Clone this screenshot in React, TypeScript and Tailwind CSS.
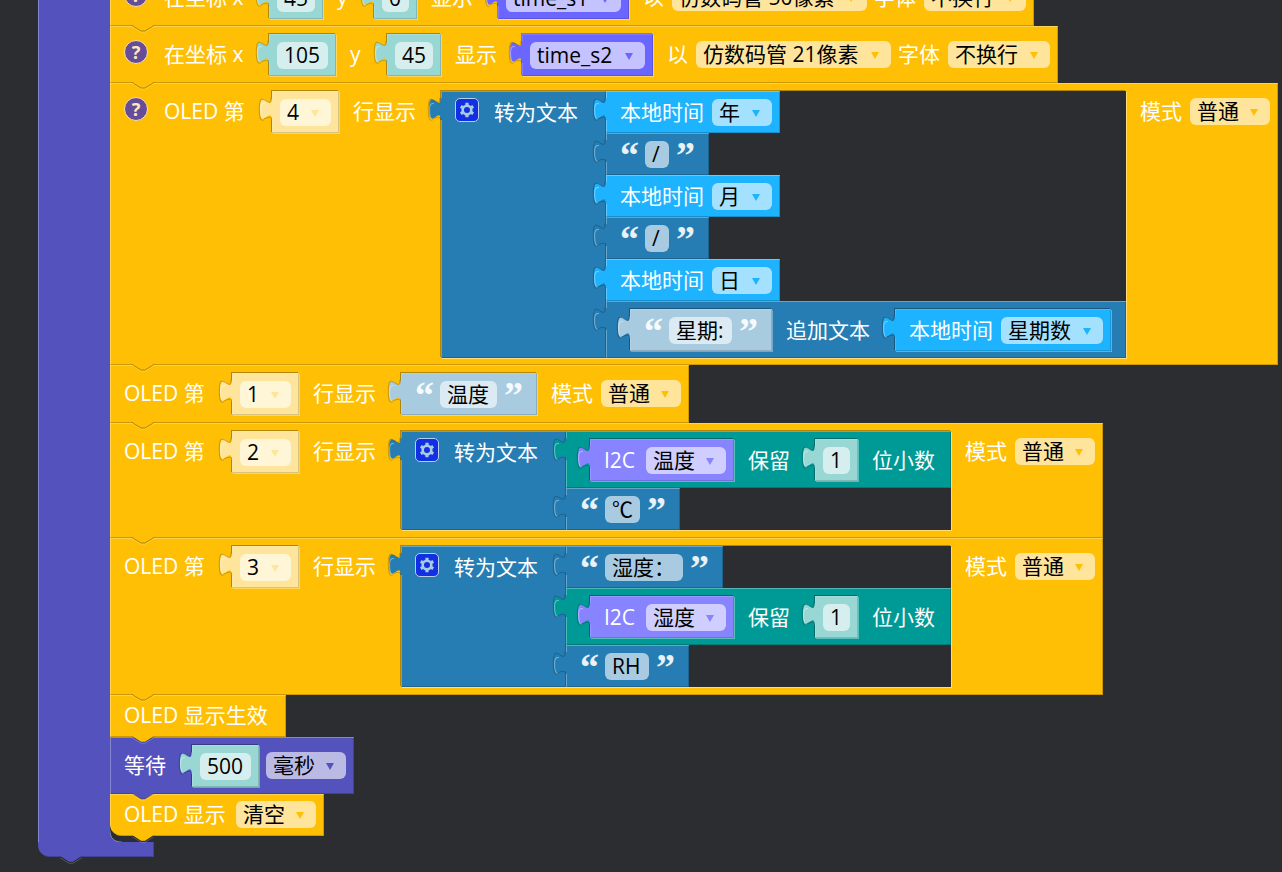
import { useState } from 'react'
import type { ReactNode } from 'react'
import clsx from 'clsx'

type Tone = 'oled' | 'oledLight' | 'math' | 'mathLight' | 'variable' | 'text' | 'textLight' | 'time' | 'sensor' | 'loop'

const BG: Record<Tone, string> = {
  oled: 'bg-[#ffbf05]',
  oledLight: 'bg-[#ffe59b]',
  math: 'bg-[#009a96]',
  mathLight: 'bg-[#99d7d5]',
  variable: 'bg-[#6b66ff]',
  text: 'bg-[#267db3]',
  textLight: 'bg-[#a8cbe0]',
  time: 'bg-[#1db3ff]',
  sensor: 'bg-[#8884ff]',
  loop: 'bg-[#5453bd]',
}

// same colours again, for svg fills
const FILL: Record<Tone, string> = {
  oled: 'text-[#ffbf05]',
  oledLight: 'text-[#ffe59b]',
  math: 'text-[#009a96]',
  mathLight: 'text-[#99d7d5]',
  variable: 'text-[#6b66ff]',
  text: 'text-[#267db3]',
  textLight: 'text-[#a8cbe0]',
  time: 'text-[#1db3ff]',
  sensor: 'text-[#8884ff]',
  loop: 'text-[#5453bd]',
}

const BEVEL = 'shadow-[inset_1px_1px_0_rgba(255,255,255,0.3),inset_-1px_-1px_0_rgba(0,0,0,0.2)]'
const SOCKET =
  'shadow-[inset_1px_1px_0_rgba(255,255,255,0.15),inset_-1px_-1px_0_rgba(0,0,0,0.15),-1px_-1px_0_rgba(0,0,0,0.3),1px_1px_0_rgba(255,255,255,0.35)]'

// Everything inside a plugged-in block sits one pixel lower than in a statement
const ITEM = 'mt-[7px] mb-[8px] h-[27px] shrink-0 [[data-value]_&]:mt-[8px] [[data-value]_&]:mb-[7px]'

function Tab({ tone }: { tone: Tone }) {
  return (
    <svg
      className={clsx('absolute -left-[12px] top-0 h-[29px] w-[13px] overflow-visible', FILL[tone])}
      viewBox="0 0 9 20"
      aria-hidden="true"
    >
      <path d="M9 5H8c0 10-8-8-8 7.5s8-2.5 8 7.5h1z" fill="currentColor" />
      <path d="M8 5c0 10-8-8-8 7.5c0 8 1.5 8.500 3.200 7.600" fill="none" stroke="#000" strokeOpacity="0.2" strokeWidth="0.7" transform="translate(-0.5 -0.3)" />
      <path d="M3 8.700c-1.800-.6-3 .4-3 3.800c0 5 .8 7 2 7" fill="none" stroke="#fff" strokeOpacity="0.4" strokeWidth="0.7" transform="translate(0.4 0.1)" />
      <path d="M2.600 19.400c2-1 5.400-2.600 5.400 .6" fill="none" stroke="#000" strokeOpacity="0.2" strokeWidth="0.7" />
    </svg>
  )
}

// The bump under a statement, drawn over the block that follows it
function Bump({ tone }: { tone: Tone }) {
  return (
    <svg
      className={clsx('absolute left-[22px] top-full z-10 -mt-px h-[8px] w-[22px] overflow-visible', FILL[tone])}
      viewBox="0 0 22 8"
      aria-hidden="true"
    >
      <path d="M0 0L9 6h4L22 0z" fill="currentColor" />
      <path d="M0 .5L9 6h4L22 .5" fill="none" stroke="#000" strokeOpacity="0.3" />
      <path d="M0 1.700L9 7.200h4L22 1.700" fill="none" stroke="#fff" strokeOpacity="0.2" />
    </svg>
  )
}

function Label({ className, children }: { className?: string; children: ReactNode }) {
  return (
    <span
      className={clsx(
        ITEM,
        'block whitespace-nowrap leading-[27px] text-white nth-last-2:mr-[7px] [[data-value]+&]:ml-[7px]',
        className,
      )}
    >
      {children}
    </span>
  )
}

function Drop({ tone, width, label, options }: { tone: Tone; width: string; label: string; options: string[] }) {
  return (
    <span className={clsx(ITEM, 'relative block', width)}>
      <select
        aria-label={label}
        className="block h-full w-full appearance-none rounded-md bg-white/60 pl-[7px] leading-[27px] text-black outline-none"
      >
        {options.map((o) => (
          <option key={o}>{o}</option>
        ))}
      </select>
      <svg
        className={clsx('pointer-events-none absolute right-[12px] top-[11px] h-[7px] w-[8px]', FILL[tone])}
        viewBox="0 0 8 7"
        aria-hidden="true"
      >
        <path d="M0 0H8L4 7z" fill="currentColor" />
      </svg>
    </span>
  )
}

function Field({ width, label, initial }: { width: string; label: string; initial: string }) {
  const [value, setValue] = useState(initial)
  return (
    <input
      aria-label={label}
      value={value}
      onChange={(e) => setValue(e.target.value)}
      className={clsx(ITEM, 'block rounded-md bg-white/60 px-[7px] leading-[27px] text-black outline-none', width)}
    />
  )
}

function Quote({ children }: { children: string }) {
  return (
    <span className="mt-[3px] h-[27px] w-[18px] shrink-0 text-center font-['Liberation_Serif',serif] text-[38px] font-bold leading-[38px] text-white/90">
      {children}
    </span>
  )
}

interface ValueProps {
  tone: Tone
  flush?: boolean
  className?: string
  children: ReactNode
}

// A block that plugs in sideways. `flush` ones are stacked in a join list.
function Value({ tone, flush, className = 'px-2', children }: ValueProps) {
  return (
    <div
      data-value
      className={clsx(
        'relative flex w-fit shrink-0 items-start gap-[7px]',
        !flush && 'ml-[17px] first:ml-[10px] nth-last-2:mr-[7px]',
        BG[tone],
        flush ? BEVEL : SOCKET,
        className,
      )}
    >
      {children}
      <Tab tone={tone} />
    </div>
  )
}

function Num({ value, width, label }: { value: string; width: string; label: string }) {
  return (
    <Value tone="mathLight">
      <Field width={width} label={label} initial={value} />
    </Value>
  )
}

function LineNo({ value }: { value: string }) {
  return (
    <Value tone="oledLight">
      <Drop tone="oledLight" width="w-[51px]" label="行号" options={[value]} />
    </Value>
  )
}

function Text({ value, width, flush, shadow }: { value: string; width: string; flush?: boolean; shadow?: boolean }) {
  return (
    <Value tone={shadow ? 'textLight' : 'text'} flush={flush} className="pl-[14px] pr-[15px]">
      <Quote>“</Quote>
      <Field width={width} label="文本" initial={value} />
      <Quote>”</Quote>
    </Value>
  )
}

function LocalTime({ unit, width, flush }: { unit: string; width: string; flush?: boolean }) {
  return (
    <Value tone="time" flush={flush} className="pl-[14px] pr-2">
      <Label className="w-[85px]">本地时间</Label>
      <Drop tone="time" width={width} label="时间单位" options={[unit]} />
    </Value>
  )
}

function Rounded({ reading }: { reading: string }) {
  return (
    <Value tone="math" flush className="pl-[14px] pr-2 pt-2 pb-[7px]">
      <Value tone="sensor" className="pl-[14px] pr-2">
        <Label className="w-[35px]">I2C</Label>
        <Drop tone="sensor" width="w-[80px]" label="传感器读数" options={[reading]} />
      </Value>
      <Label className="w-[43px]">保留</Label>
      <Num value="1" width="w-[27px]" label="小数位数" />
      <Label className="w-[64px]">位小数</Label>
    </Value>
  )
}

function Join({ children }: { children: ReactNode }) {
  return (
    <div data-value className="relative ml-[17px] flex shrink-0 bg-[#2c2d30] shadow-[-1px_-1px_0_rgba(0,0,0,0.3),1px_1px_0_rgba(255,255,255,0.45)]">
      <div className={clsx('flex w-[165px] items-start gap-[15px] pl-[14px]', BG.text, BEVEL)}>
        <button type="button" aria-label="编辑列表" className="mt-[7px] flex size-6 shrink-0 items-center justify-center rounded-[5px] border border-[#b9cdf2] bg-[#1130e3]">
          <svg viewBox="0 0 18 18" className="size-[18px] text-[#a8cbe0]" aria-hidden="true">
            <circle cx="9" cy="9" r="4.300" fill="none" stroke="currentColor" strokeWidth="2.600" />
            <g stroke="currentColor" strokeWidth="3.200">
              <path d="M9 1.800v2.500M9 13.700v2.500" />
              <path d="M9 1.800v2.500M9 13.700v2.500" transform="rotate(60 9 9)" />
              <path d="M9 1.800v2.500M9 13.700v2.500" transform="rotate(-60 9 9)" />
            </g>
          </svg>
        </button>
        <Label>转为文本</Label>
      </div>
      <div className="flex flex-col">{children}</div>
      <Tab tone="text" />
    </div>
  )
}

function Help() {
  return (
    <button
      type="button"
      aria-label="帮助"
      className="mt-[6px] mr-[9px] flex size-6 shrink-0 items-center justify-center rounded-full border border-[#ffe2a0] bg-[#664d99] font-['Noto_Sans',sans-serif] text-[18px] font-bold leading-none text-[#ffe9b8]"
    >
      ?
    </button>
  )
}

function Statement({ tone = 'oled', className, children }: { tone?: Tone; className?: string; children: ReactNode }) {
  return (
    <div className={clsx('relative flex w-fit items-start gap-[7px] pl-[14px] pr-2', BG[tone], BEVEL, className)}>
      {children}
      <Bump tone={tone} />
    </div>
  )
}

function DrawAt({ x, y, xWidth, yWidth, variable, font }: Record<'x' | 'y' | 'xWidth' | 'yWidth' | 'variable' | 'font', string>) {
  return (
    <Statement className="pt-2 pb-[7px]">
      <Help />
      <Label className="w-[81px]">在坐标 x</Label>
      <Num value={x} width={xWidth} label="x 坐标" />
      <Label className="w-[13px]">y</Label>
      <Num value={y} width={yWidth} label="y 坐标" />
      <Label className="w-[43px]">显示</Label>
      <Value tone="variable">
        <Drop tone="variable" width="w-[115px]" label="变量" options={[variable]} />
      </Value>
      <Label className="w-[22px]">以</Label>
      <Drop tone="oled" width="w-[195px]" label="字体大小" options={[font]} />
      <Label className="w-[43px]">字体</Label>
      <Drop tone="oled" width="w-[102px]" label="换行" options={['不换行', '自动换行']} />
    </Statement>
  )
}

function ShowLine({ line, help, className = 'py-2', children }: { line: string; help?: boolean; className?: string; children: ReactNode }) {
  return (
    <Statement className={className}>
      {help && <Help />}
      <Label className="w-[84px]">OLED 第</Label>
      <LineNo value={line} />
      <Label className="w-[64px]">行显示</Label>
      {children}
      <Label className="w-[43px]">模式</Label>
      <Drop tone="oled" width="w-[80px]" label="显示模式" options={['普通', '反白']} />
    </Statement>
  )
}

export default function App() {
  return (
    <main className="min-h-screen overflow-hidden bg-[#2c2d30] pl-[38px] font-['Open_Sans','Noto_Sans_CJK_SC',sans-serif] text-[21px]">
      <div className="relative -mt-[31px] w-fit">
        <div className="flex">
          <div className={clsx('w-[72px] shrink-0 shadow-[inset_1px_0_0_rgba(255,255,255,0.3)]', BG.loop)} />
          <div className="relative pb-[6px]">
            <DrawAt x="45" y="0" xWidth="w-[38px]" yWidth="w-[27px]" variable="time_s1" font="仿数码管 50像素" />
            <DrawAt x="105" y="45" xWidth="w-[51px]" yWidth="w-[38px]" variable="time_s2" font="仿数码管 21像素" />
            <ShowLine line="4" help className="pt-2 pb-[7px]">
              <Join>
                <LocalTime unit="年" width="w-[60px]" flush />
                <Text value="/" width="w-[24px]" flush />
                <LocalTime unit="月" width="w-[60px]" flush />
                <Text value="/" width="w-[24px]" flush />
                <LocalTime unit="日" width="w-[60px]" flush />
                <Value tone="text" flush className="pl-[14px] pr-2 pt-2 pb-[7px]">
                  <Text value="星期:" width="w-[63px]" shadow />
                  <Label className="w-[85px]">追加文本</Label>
                  <LocalTime unit="星期数" width="w-[102px]" />
                </Value>
              </Join>
            </ShowLine>
            <ShowLine line="1">
              <Text value="温度" width="w-[57px]" shadow />
            </ShowLine>
            <ShowLine line="2">
              <Join>
                <Rounded reading="温度" />
                <Text value="℃" width="w-[35px]" flush />
              </Join>
            </ShowLine>
            <ShowLine line="3">
              <Join>
                <Text value="湿度：" width="w-[78px]" flush />
                <Rounded reading="湿度" />
                <Text value="RH" width="w-[44px]" flush />
              </Join>
            </ShowLine>
            <Statement>
              <Label className="w-[147px]">OLED 显示生效</Label>
            </Statement>
            <Statement tone="loop" className="pt-2 pb-[7px]">
              <Label className="w-[44px]">等待</Label>
              <Num value="500" width="w-[51px]" label="时长" />
              <Drop tone="loop" width="w-[80px]" label="时间单位" options={['毫秒', '秒']} />
            </Statement>
            <Statement className="rounded-bl-[12px]">
              <Label className="w-[105px]">OLED 显示</Label>
              <Drop tone="oled" width="w-[80px]" label="操作" options={['清空', '点亮']} />
            </Statement>
            <svg className={clsx('absolute bottom-0 left-0 size-3', FILL.loop)} viewBox="0 0 12 12" aria-hidden="true">
              <path d="M0 0C0 8 4 12 12 12H0z" fill="currentColor" />
              <path d="M0 0C0 8 4 12 12 12" fill="none" stroke="#fff" strokeOpacity="0.35" />
            </svg>
          </div>
        </div>
        <div className={clsx('relative h-[15px] w-[116px] rounded-bl-[12px] shadow-[inset_-1px_-1px_0_rgba(0,0,0,0.2)]', BG.loop)}>
          <Bump tone="loop" />
        </div>
      </div>
    </main>
  )
}
